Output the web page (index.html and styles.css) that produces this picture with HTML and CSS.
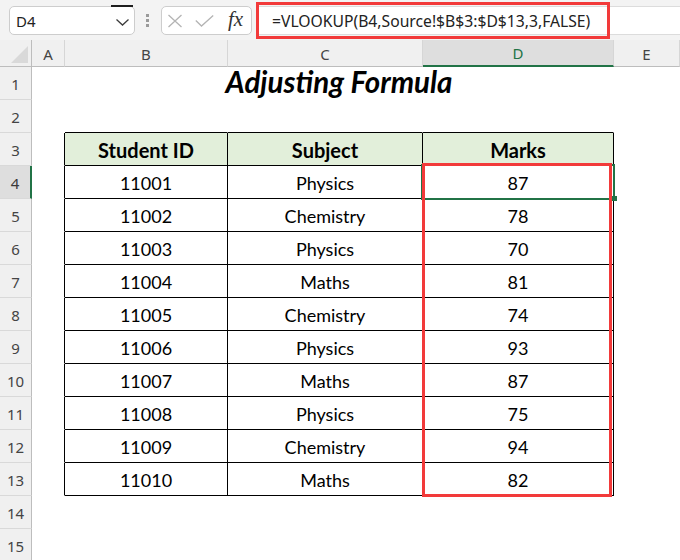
FILE: index.html
```html
<!DOCTYPE html>
<html>
<head>
<meta charset="utf-8">
<link rel="stylesheet" href="styles.css">
</head>
<body>
<div class="app">
  <div class="toolbar">
    <div class="namebox">
      <span class="nb-text">D4</span>
      <svg class="chev" width="13" height="7" viewBox="0 0 13 7"><polyline points="0.5,0.5 6.5,6 12.5,0.5" fill="none" stroke="#3c3c3c" stroke-width="1.3"/></svg>
      <span class="nb-mark"></span>
    </div>
    <div class="grip"><i></i><i></i><i></i></div>
    <div class="fxbox">
      <svg class="ico-x" width="16" height="14" viewBox="0 0 16 14"><path d="M1.5 1 L14.5 13 M14.5 1 L1.5 13" stroke="#b4b4b4" stroke-width="1.3" fill="none"/></svg>
      <svg class="ico-ok" width="19" height="12" viewBox="0 0 19 12"><polyline points="0.8,5.5 6.5,11 18.2,0.6" fill="none" stroke="#b4b4b4" stroke-width="1.3"/></svg>
      <span class="fx">fx</span>
    </div>
    <div class="formula"><span class="ftext">=VLOOKUP(B4,Source!$B$3:$D$13,3,FALSE)</span></div>
  </div>

  <div class="sheet">
    <div class="ch corner"><span class="tri"></span></div>
    <div class="ch">A</div>
    <div class="ch">B</div>
    <div class="ch">C</div>
    <div class="ch sel">D</div>
    <div class="ch">E</div>

    <div class="rh">1</div><div class="c"></div><div class="c title">Adjusting Formula</div><div class="c"></div>
    <div class="rh">2</div><div class="c"></div><div class="c bt"></div><div class="c bt"></div><div class="c bt"></div><div class="c"></div>
    <div class="rh">3</div><div class="c bl"></div><div class="c t th">Student ID</div><div class="c t th">Subject</div><div class="c t th">Marks</div><div class="c"></div>
    <div class="rh sel">4</div><div class="c bl"></div><div class="c t">11001</div><div class="c t">Physics</div><div class="c t">87</div><div class="c"></div>
    <div class="rh">5</div><div class="c bl"></div><div class="c t">11002</div><div class="c t">Chemistry</div><div class="c t">78</div><div class="c"></div>
    <div class="rh">6</div><div class="c bl"></div><div class="c t">11003</div><div class="c t">Physics</div><div class="c t">70</div><div class="c"></div>
    <div class="rh">7</div><div class="c bl"></div><div class="c t">11004</div><div class="c t">Maths</div><div class="c t">81</div><div class="c"></div>
    <div class="rh">8</div><div class="c bl"></div><div class="c t">11005</div><div class="c t">Chemistry</div><div class="c t">74</div><div class="c"></div>
    <div class="rh">9</div><div class="c bl"></div><div class="c t">11006</div><div class="c t">Physics</div><div class="c t">93</div><div class="c"></div>
    <div class="rh">10</div><div class="c bl"></div><div class="c t">11007</div><div class="c t">Maths</div><div class="c t">87</div><div class="c"></div>
    <div class="rh">11</div><div class="c bl"></div><div class="c t">11008</div><div class="c t">Physics</div><div class="c t">75</div><div class="c"></div>
    <div class="rh">12</div><div class="c bl"></div><div class="c t">11009</div><div class="c t">Chemistry</div><div class="c t">94</div><div class="c"></div>
    <div class="rh">13</div><div class="c bl"></div><div class="c t">11010</div><div class="c t">Maths</div><div class="c t">82</div><div class="c"></div>
    <div class="rh">14</div><div class="c"></div><div class="c"></div><div class="c"></div><div class="c"></div><div class="c"></div>
    <div class="rh">15</div><div class="c"></div><div class="c"></div><div class="c"></div><div class="c"></div><div class="c"></div>
  </div>

  <div class="selection"></div>
  <div class="fill-handle"></div>
  <div class="mark mark-formula"></div>
  <div class="mark mark-range"></div>
</div>
</body>
</html>
```

FILE: styles.css
```css
* { box-sizing: border-box; }
html, body { margin: 0; padding: 0; }
body { width: 680px; height: 560px; overflow: hidden; background: #fff; }

.app {
  position: relative;
  width: 680px;
  height: 560px;
  overflow: hidden;
  font-family: "Noto Sans", "Open Sans", sans-serif;
}

/* ---------- toolbar ---------- */
.toolbar {
  height: 40px;
  background: #f3f3f3;
  display: flex;
  align-items: flex-start;
  padding-top: 6px;
}
.namebox {
  position: relative;
  margin-left: 9px;
  width: 126px;
  height: 29px;
  background: #fff;
  border: 1px solid #cdcdcd;
  border-radius: 5px;
  display: flex;
  align-items: center;
  padding-left: 6px;
}
.nb-text { font-size: 15px; color: #222; }
.chev { position: absolute; left: 106px; top: 12px; }
.nb-mark {
  position: absolute;
  left: 101px;
  top: -2px;
  width: 22px;
  height: 2px;
  background: #1e1e1e;
}
.grip {
  margin-left: 11px;
  margin-top: 8px;
  width: 3px;
  display: flex;
  flex-direction: column;
  gap: 2px;
}
.grip i { display: block; width: 3px; height: 3px; background: #9a9a9a; }
.fxbox {
  margin-left: 12px;
  width: 91px;
  height: 29px;
  background: #fff;
  border: 1px solid #cdcdcd;
  border-radius: 5px;
  display: flex;
  align-items: center;
  padding-left: 5px;
}
.ico-x { margin-top: 1px; }
.ico-ok { margin-left: 12px; margin-top: 1px; }
.fx {
  margin-left: 14px;
  font-family: "Liberation Serif", "DejaVu Serif", serif;
  font-style: italic;
  font-size: 21px;
  color: #333;
  line-height: 1;
  margin-top: -3px;
}
.formula {
  margin-left: 6px;
  flex: 1;
  height: 29px;
  background: #fff;
  border-top: 1px solid #dcdcdc;
  border-bottom: 1px solid #dcdcdc;
  display: flex;
  align-items: center;
  padding-left: 14px;
}
.ftext { font-size: 15.7px; color: #222; white-space: nowrap; }

/* ---------- sheet ---------- */
.sheet {
  display: grid;
  grid-template-columns: 32px 33px 163px 195px 191px 66px;
  grid-template-rows: 27px repeat(15, 33px);
}
.ch {
  background: #f0f0f0;
  border-right: 1px solid #d6d6d6;
  border-bottom: 1px solid #bdbdbd;
  display: flex;
  align-items: center;
  justify-content: center;
  font-size: 15px;
  color: #444;
  padding-top: 1px;
}
.ch.sel {
  background: #dedede;
  color: #217346;
  border-bottom: 2px solid #217346;
}
.corner { position: relative; border-right-color: #bdbdbd; }
.tri {
  position: absolute;
  right: 3px;
  bottom: 3px;
  width: 0;
  height: 0;
  border-left: 17px solid transparent;
  border-bottom: 17px solid #d9d9d9;
}
.rh {
  background: #f0f0f0;
  border-right: 1px solid #bdbdbd;
  border-bottom: 1px solid #d9d9d9;
  display: flex;
  align-items: center;
  justify-content: center;
  font-size: 15px;
  color: #444;
  padding-top: 2px;
}
.rh.sel {
  background: #dedede;
  border-right: 2px solid #217346;
  color: #3a3a3a;
}
.c {
  border-right: 1px solid transparent;
  border-bottom: 1px solid transparent;
  display: flex;
  align-items: center;
  justify-content: center;
  font-family: Lato, "Liberation Sans", sans-serif;
  font-size: 18px;
  color: #000;
}
.title {
  grid-column: span 3;
  font-weight: 700;
  font-style: italic;
  font-size: 29.5px;
  padding-bottom: 4px;
}
.bt { border-bottom-color: #000; }
.bl { border-right-color: #000; }
.t { border-right-color: #000; border-bottom-color: #000; padding-top: 1px; }
.th { background: #e2efda; font-weight: 700; font-size: 20px; }

/* ---------- overlays ---------- */
.selection {
  position: absolute;
  left: 421px;
  top: 164px;
  width: 194px;
  height: 36px;
  border: 2px solid #217346;
}
.fill-handle {
  position: absolute;
  left: 612px;
  top: 196px;
  width: 5px;
  height: 5px;
  background: #217346;
}
.mark {
  position: absolute;
  border: 3px solid #f23a3a;
}
.mark-formula { left: 256px; top: 2px; width: 354px; height: 37px; }
.mark-range { left: 422px; top: 163px; width: 190px; height: 334px; }
```
